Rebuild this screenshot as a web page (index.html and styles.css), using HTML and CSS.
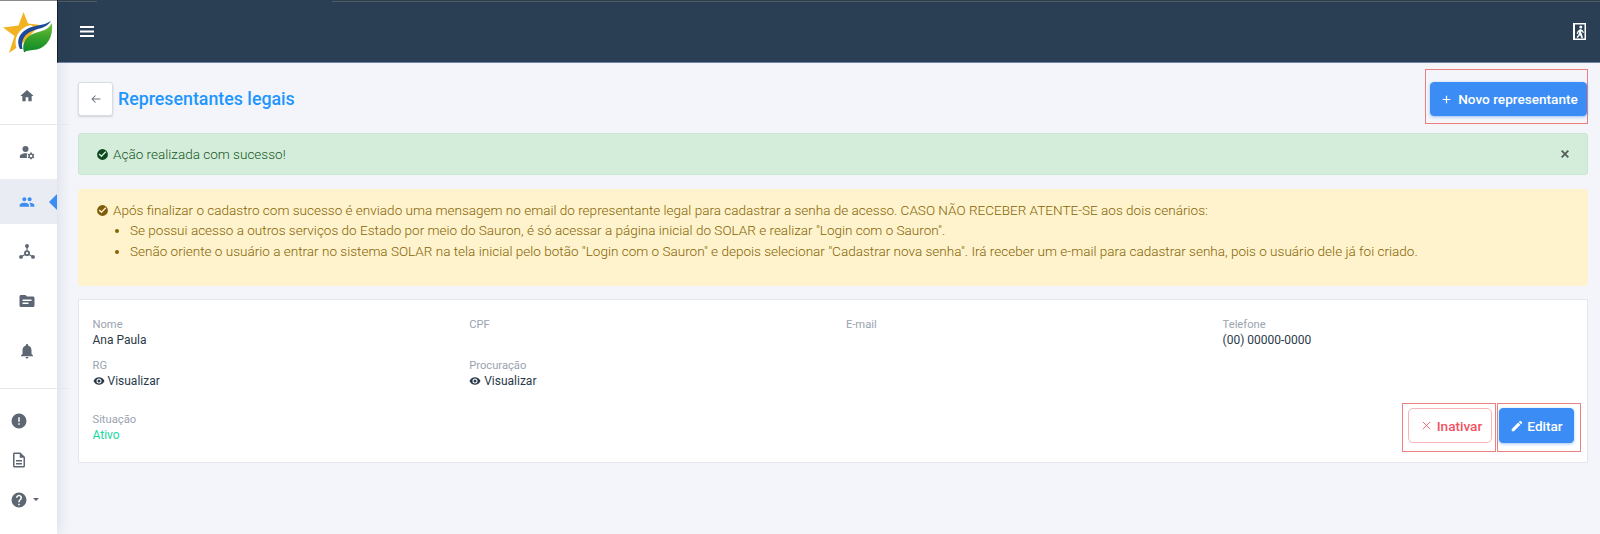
FILE: index.html
```html
<!DOCTYPE html>
<html lang="pt-BR">
<head>
<meta charset="utf-8">
<title>Representantes legais</title>
<link rel="stylesheet" href="styles.css">
</head>
<body>
<div class="app">
  <aside class="sidebar">
    <div class="logo">
      <svg width="57" height="62" viewBox="0 0 57 62">
        <defs>
          <linearGradient id="leaf" x1="0" y1="0" x2="0" y2="1">
            <stop offset="0" stop-color="#7cc243"/>
            <stop offset=".45" stop-color="#3da52a"/>
            <stop offset="1" stop-color="#0a8a2a"/>
          </linearGradient>
        </defs>
        <path d="M23.500 12 L28 23.500 L40 25 L22 44 L9 53 L14.500 36 L3 27.500 L18.500 25.500 Z" fill="#f3b221"/>
        <path d="M16.500 48 C13 36 21 27 31 25 L33 27 C24 29 18 37 20 46 Z" fill="#fff"/>
        <path d="M20 49 C15 38 22 30 32 27 C40 24.500 46 25 51 20.500 C47 29 37 28 30 32 C23 36 21 42 22.500 49 Z" fill="#1c4a9a"/>
        <path d="M24 52.500 C21 42 27 36 35 33 C42 31 48 30 52 23 C53.500 37 47 47 37 49.500 C31 50.500 27 50 24 52.500 Z" fill="url(#leaf)"/>
      </svg>
    </div>
    <nav class="nav nav-main">
      <a class="nav-item nav-home"><svg class="ico ico-home" viewBox="0 0 24 24"><path d="M10 20v-6h4v6h5v-8h3L12 3 2 12h3v8z"/></svg></a>
      <div class="divider"></div>
      <a class="nav-item nav-user"><svg class="ico" viewBox="0 0 24 24"><circle cx="10" cy="8" r="4"/><path d="M10 13.500c-3.500 0-7.500 1.800-7.500 4V20h9.700a7 7 0 0 1 .3-6.100c-1-.3-1.900-.4-2.500-.4z"/><path d="M20.800 16.700l1-.8-1-1.700-1.200.4a4 4 0 0 0-1-.6L18.400 12.800h-2l-.2 1.200a4 4 0 0 0-1 .6l-1.200-.4-1 1.700 1 .8a4 4 0 0 0 0 1.200l-1 .8 1 1.700 1.200-.4c.3.2.6.4 1 .6l.2 1.200h2l.2-1.200c.4-.2.7-.4 1-.6l1.200.4 1-1.700-1-.8a4 4 0 0 0 0-1.200zM17.400 19a1.700 1.700 0 1 1 0-3.400 1.700 1.700 0 0 1 0 3.400z"/></svg></a>
      <a class="nav-item active"><svg class="ico" viewBox="0 0 24 24"><path d="M16 11c1.660 0 2.990-1.340 2.990-3S17.660 5 16 5s-3 1.340-3 3 1.340 3 3 3zm-8 0c1.660 0 2.990-1.340 2.990-3S9.660 5 8 5 5 6.340 5 8s1.340 3 3 3zm0 2c-2.330 0-7 1.170-7 3.500V19h14v-2.500C15 14.170 10.330 13 8 13zm8 0c-.29 0-.62.020-.97.050 1.160.84 1.970 1.970 1.970 3.450V19h6v-2.500c0-2.330-4.670-3.500-7-3.500z"/></svg></a>
      <a class="nav-item"><svg class="ico" viewBox="0 0 24 24"><circle cx="12" cy="4" r="2.600"/><circle cx="4" cy="18.500" r="2.600"/><circle cx="20" cy="18.500" r="2.600"/><path d="M11.200 5h1.600v5h-1.600zM5 17l4-2.500.8 1.400-4 2.500zM19 17l-4-2.500-.8 1.400 4 2.500z"/><path fill-rule="evenodd" d="M12 9.500a4 4 0 1 1 0 8 4 4 0 0 1 0-8zm0 2.500a1.500 1.500 0 1 0 0 3 1.500 1.500 0 0 0 0-3z"/></svg></a>
      <a class="nav-item"><svg class="ico" viewBox="0 0 24 24"><path d="M20 6h-8l-2-2H4c-1.100 0-1.990.9-1.990 2L2 18c0 1.100.9 2 2 2h16c1.100 0 2-.9 2-2V8c0-1.100-.9-2-2-2zm-6 10H6v-2h8v2zm4-4H6v-2h12v2z"/></svg></a>
      <a class="nav-item"><svg class="ico" viewBox="0 0 24 24"><path d="M12 22c1.100 0 2-.9 2-2h-4c0 1.100.89 2 2 2zm6-6v-5c0-3.070-1.640-5.640-4.500-6.320V4c0-.83-.67-1.500-1.500-1.500s-1.500.67-1.500 1.500v.68C7.630 5.360 6 7.920 6 11v5l-2 2v1h16v-1l-2-2z"/></svg></a>
    </nav>
    <div class="divider divider-low"></div>
    <nav class="nav nav-foot">
      <a class="foot-item"><svg class="ico" viewBox="0 0 24 24"><path d="M12 2a10 10 0 1 0 0 20 10 10 0 0 0 0-20zm1 15h-2v-2h2v2zm0-4h-2V7h2v6z"/></svg></a>
      <a class="foot-item"><svg class="ico" viewBox="0 0 24 24"><path d="M8 16h8v2H8zm0-4h8v2H8zm6-10H6c-1.100 0-2 .9-2 2v16c0 1.100.89 2 1.990 2H18c1.100 0 2-.9 2-2V8l-6-6zm4 18H6V4h7v5h5v11z"/></svg></a>
      <a class="foot-item foot-help"><svg class="ico" viewBox="0 0 24 24"><path d="M12 2a10 10 0 1 0 0 20 10 10 0 0 0 0-20zm1 17h-2v-2h2v2zm2.070-7.750l-.9.920C13.450 12.900 13 13.500 13 15h-2v-.5c0-1.100.45-2.100 1.170-2.830l1.240-1.260c.37-.36.590-.86.590-1.410 0-1.100-.9-2-2-2s-2 .9-2 2H8c0-2.210 1.790-4 4-4s4 1.790 4 4c0 .88-.36 1.680-.93 2.250z"/></svg><span class="caret"></span></a>
    </nav>
  </aside>
  <div class="content">
    <header class="topbar">
      <svg class="menu-ico" viewBox="0 0 14 11"><path d="M0 0h14v2H0zM0 4.500h14v2H0zM0 9h14v2H0z"/></svg>
      <svg class="exit-ico" viewBox="0 0 13 17"><path fill-rule="evenodd" d="M0 0h13v17H0zM2 1.500v14h9.500v-14z"/><circle cx="7.800" cy="4" r="1.500"/><path d="M7 6l2.500 1 1.500 2.500-1 .5-1.200-1.500-1 .2 1.200 2.500L10 15H8.500L7 12l-1 1.500L4.500 15 3.500 14l1.800-2 .9-3-1 .6-.6 1.600-1-.4.800-2.300z"/></svg>
    </header>
    <main class="page">
      <div class="title-row">
        <div class="title-left">
          <button class="back-btn" type="button"><svg viewBox="0 0 16 16"><path d="M13 8H3.500M7.500 4 3.500 8l4 4"/></svg></button>
          <h1 class="title">Representantes legais</h1>
        </div>
        <div class="mark mark-new">
          <button class="btn btn-primary btn-new" type="button"><svg viewBox="0 0 14 14"><path d="M7 1v12M1 7h12"/></svg>Novo representante</button>
        </div>
      </div>
      <div class="alert alert-ok">
        <svg class="alert-ico" viewBox="0 0 24 24"><path d="M12 2a10 10 0 1 0 0 20 10 10 0 0 0 0-20zm-2 15-5-5 1.900-1.900L10 13.200l7.100-7.100L19 8z"/></svg>
        <span>Ação realizada com sucesso!</span>
        <svg class="alert-close" viewBox="0 0 12 12"><path d="M2 2l8 8M10 2l-8 8"/></svg>
      </div>
      <div class="alert alert-warn">
        <svg class="alert-ico" viewBox="0 0 24 24"><path d="M12 2a10 10 0 1 0 0 20 10 10 0 0 0 0-20zm-2 15-5-5 1.900-1.900L10 13.200l7.100-7.100L19 8z"/></svg>
        <div class="warn-body">
          <p>Após finalizar o cadastro com sucesso é enviado uma mensagem no email do representante legal para cadastrar a senha de acesso. CASO NÃO RECEBER ATENTE-SE aos dois cenários:</p>
          <ul>
            <li>Se possui acesso a outros serviços do Estado por meio do Sauron, é só acessar a página inicial do SOLAR e realizar "Login com o Sauron".</li>
            <li>Senão oriente o usuário a entrar no sistema SOLAR na tela inicial pelo botão "Login com o Sauron" e depois selecionar "Cadastrar nova senha". Irá receber um e-mail para cadastrar senha, pois o usuário dele já foi criado.</li>
          </ul>
        </div>
      </div>
      <section class="card">
        <div class="fields">
          <div class="field"><div class="label">Nome</div><div class="value">Ana Paula</div></div>
          <div class="field"><div class="label">CPF</div></div>
          <div class="field"><div class="label">E-mail</div></div>
          <div class="field"><div class="label">Telefone</div><div class="value">(00) 00000-0000</div></div>
          <div class="field"><div class="label">RG</div><div class="value"><svg class="eye" viewBox="0 0 24 24"><path d="M12 4.500C7 4.500 2.730 7.610 1 12c1.730 4.390 6 7.500 11 7.500s9.270-3.110 11-7.500c-1.730-4.390-6-7.500-11-7.500zM12 17a5 5 0 1 1 0-10 5 5 0 0 1 0 10zm0-8a3 3 0 1 0 0 6 3 3 0 0 0 0-6z"/></svg>Visualizar</div></div>
          <div class="field"><div class="label">Procuração</div><div class="value"><svg class="eye" viewBox="0 0 24 24"><path d="M12 4.500C7 4.500 2.730 7.610 1 12c1.730 4.390 6 7.500 11 7.500s9.270-3.110 11-7.500c-1.730-4.390-6-7.500-11-7.500zM12 17a5 5 0 1 1 0-10 5 5 0 0 1 0 10zm0-8a3 3 0 1 0 0 6 3 3 0 0 0 0-6z"/></svg>Visualizar</div></div>
        </div>
        <div class="card-foot">
          <div class="field"><div class="label">Situação</div><div class="value value-ok">Ativo</div></div>
          <div class="actions">
            <div class="mark mark-inactive">
              <button class="btn btn-outline" type="button"><svg viewBox="0 0 12 12"><path d="M1 1l10 10M11 1L1 11"/></svg>Inativar</button>
            </div>
            <div class="mark mark-edit">
              <button class="btn btn-primary btn-edit" type="button"><svg class="pencil" viewBox="0 0 24 24"><path d="M3 17.250V21h3.750L17.810 9.940l-3.750-3.750L3 17.250zM20.710 7.040a1 1 0 0 0 0-1.410l-2.340-2.340a1 1 0 0 0-1.410 0l-1.830 1.830 3.750 3.750 1.830-1.830z"/></svg>Editar</button>
            </div>
          </div>
        </div>
      </section>
    </main>
  </div>
</div>
</body>
</html>
```

FILE: styles.css
```css
* { box-sizing: border-box; }
html, body { margin: 0; height: 100%; }
body { font-family: Roboto, "Liberation Sans", sans-serif; font-size: 13.540px; color: #2b3a4a; background: #f3f5fa; overflow: hidden; }
.app { display: flex; height: 534px; }

.sidebar { flex: 0 0 57px; width: 57px; background: #fff; display: flex; flex-direction: column; box-shadow: 3px 0 12px rgba(40, 50, 90, .10); position: relative; z-index: 1; }
.logo { height: 62px; flex: none; border-top: 1px solid #8a8a8a; }
.logo svg { display: block; margin-top: -1px; }
.nav { display: flex; flex-direction: column; }
.nav-main { padding-top: 11px; }
.nav-item { height: 49.500px; display: flex; align-items: center; justify-content: center; padding-right: 4px; position: relative; }
.nav-home { height: 45px; margin-bottom: 6px; }
.nav-user { height: 54px; }
.nav-item.active { background: #e9ecf2; height: 45px; margin-bottom: 3px; }
.nav-item.active .ico { fill: #3b8df5; width: 16px; height: 16px; }
.nav-item.active::after { content: ""; position: absolute; right: 0; top: 15px; border: 8px solid transparent; border-left-width: 0; border-right: 8px solid #3b8df5; }
.ico { width: 18px; height: 18px; fill: #5d6673; display: block; }
.ico-home { width: 16px; height: 16px; }
.divider { width: 69px; height: 1px; background: #e6e7ea; flex: none; }
.divider-low { margin-top: 12px; }
.nav-foot { padding-top: 22px; gap: 19.500px; }
.foot-item { height: 20px; display: flex; align-items: center; padding-left: 10px; }
.foot-help { gap: 5px; }
.caret { border: 3px solid transparent; border-bottom-width: 0; border-top: 3px solid #5d6673; }

.content { flex: 1; min-width: 0; display: flex; flex-direction: column; }
.topbar { height: 63px; flex: none; background: linear-gradient(90deg, #55585c 39px, transparent 39px, transparent 274px, #55585c 274px) 0 1px / 100% 1px no-repeat, #2a3f54; border-left: 1px solid #10202f; border-bottom: 1px solid #6f83a8; display: flex; align-items: center; justify-content: space-between; padding: 1px 14px 0 22px; }
.menu-ico { width: 14px; height: 11px; fill: #fff; }
.exit-ico { width: 13px; height: 17px; fill: #fff; }

.page { padding: 6px 12px 0 21px; display: flex; flex-direction: column; }
.title-row { display: flex; justify-content: space-between; align-items: flex-start; height: 55px; margin-bottom: 9px; }
.title-left { display: flex; align-items: center; gap: 5px; margin-top: 13px; }
.back-btn { width: 35px; height: 34px; background: #fff; border: 1px solid #d9dce2; border-radius: 3px; box-shadow: 0 1px 2px rgba(0, 0, 0, .15); padding: 0; display: flex; align-items: center; justify-content: center; }
.back-btn svg { width: 14px; height: 14px; fill: none; stroke: #6b7480; stroke-width: 1.200; }
.title { margin: 0; font-size: 17.800px; font-weight: 500; color: #1f96ff; line-height: 24px; }

.mark { border: 1px solid #ec7f7f; display: flex; align-items: flex-start; }
.mark-new { width: 163px; height: 55px; justify-content: flex-end; padding-top: 12px; }
.btn { height: 35px; border-radius: 4px; font-family: inherit; font-size: 13.600px; font-weight: 500; display: flex; align-items: center; justify-content: center; padding: 0; }
.btn-primary { background: #3b8df5; color: #fff; border: 1px solid #3b8df5; box-shadow: 0 1px 3px rgba(59, 141, 245, .5); }
.btn-new { width: 157px; height: 34px; gap: 7px; padding-left: 3px; }
.btn-new svg { width: 9px; height: 9px; fill: none; stroke: #fff; stroke-width: 1.900; }

.alert { border-radius: 3px; border: 1px solid transparent; display: flex; font-weight: 300; padding: 0 18px 0 17px; }
.alert-ico { width: 13px; height: 13px; flex: none; margin-right: 4px; }
.alert-ok { background: #d4edda; border-color: #c9e6d0; color: #155724; height: 42px; align-items: center; }
.alert-ok .alert-ico { fill: #0f4a1e; }
.alert-close { width: 10px; height: 10px; margin-left: auto; margin-right: -1px; fill: none; stroke: #555f58; stroke-width: 2.200; }
.alert-warn { background: #fff3cd; color: #856404; height: 97px; margin-top: 14px; padding-top: 10px; border-color: #fff3cd; }
.alert-warn .alert-ico { fill: #7e5c0a; margin-top: 4px; }
.warn-body { flex: 1; line-height: 20.400px; }
.warn-body p { margin: 0; }
.warn-body ul { margin: 0; padding: 0 0 0 17px; }

.card { background: #fff; border: 1px solid #e3e6ec; margin-top: 13px; height: 164px; padding: 17px 13px 0 13.500px; }
.fields { display: grid; grid-template-columns: repeat(4, 376.700px); row-gap: 10px; }
.field { min-height: 31px; }
.label { font-size: 11.200px; line-height: 15px; color: #9aa4b0; font-weight: 400; }
.value { font-size: 12px; line-height: 16px; color: #2b3a4a; display: flex; align-items: center; }
.value-ok { color: #16d9a0; }
.eye { width: 12px; height: 12px; fill: #2b3a4a; margin-right: 3px; }
.card-foot { display: flex; justify-content: space-between; margin-top: 23px; align-items: flex-start; }
.actions { display: flex; margin-top: -9px; margin-right: -7px; gap: 1px; }
.mark-inactive { width: 94px; height: 49px; padding: 4px 0 0 5px; }
.mark-edit { width: 84px; height: 49px; padding: 4px 0 0 1px; }
.btn-outline { width: 84px; background: #fff; color: #f0525f; border: 1.500px solid #f7b5b9; padding-left: 4px; border-radius: 5px; }
.btn-outline svg { width: 9px; height: 9px; fill: none; stroke: #f0525f; stroke-width: 1.100; margin-right: 6px; }
.btn-edit { width: 75px; }
.pencil { width: 14px; height: 14px; fill: #fff; margin-right: 3px; }
```
